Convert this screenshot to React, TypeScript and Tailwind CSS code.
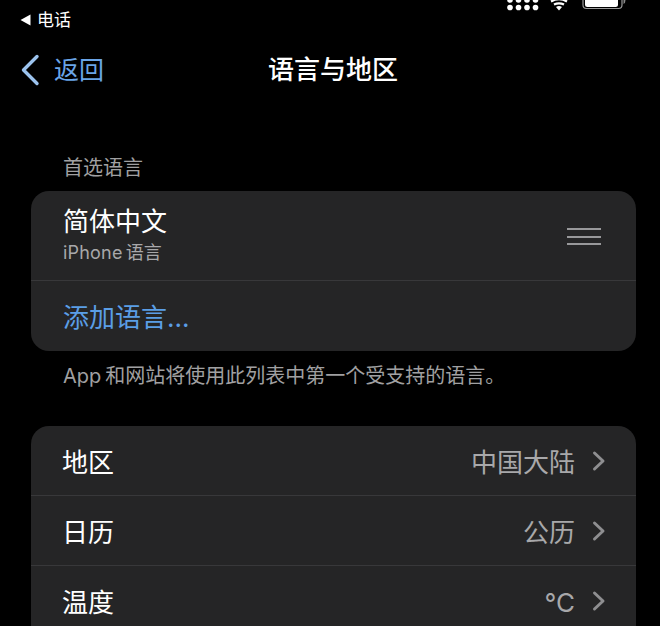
import React from "react"

const font = {
  fontFamily: '"Inter", "Noto Sans CJK SC", sans-serif',
}

const StatusIcons = () => (
  <svg width="124" height="12" viewBox="0 0 124 12" className="block">
    {[0, 8.5, 17, 25.5].map((x) => (
      <g key={x} fill="#fff">
        <circle cx={x + 3} cy={0} r={2.8} />
        <circle cx={x + 3} cy={7.5} r={2.8} />
      </g>
    ))}
    <path d="M44 1.5 Q52 -3 60 1.5" stroke="#fff" strokeWidth="2.2" fill="none" />
    <path d="M47 4.6 Q52 2 57 4.6" stroke="#fff" strokeWidth="2.2" fill="none" />
    <path d="M49 7 Q52 5 55 7 L52 10.5 Z" fill="#fff" />
    <rect x="76" y="-6" width="39" height="14.5" rx="3.5" fill="none" stroke="#9a9a9a" strokeWidth="1.2" />
    <rect x="78" y="-5" width="33" height="12" rx="2.5" fill="#fff" />
    <path d="M116.5 0 L116.5 4 Q118.5 3 118.5 0 Z" fill="#8a8a8a" />
  </svg>
)

const Row = ({ label, value, last }: { label: string; value: string; last?: boolean }) => (
  <div className={`flex h-[70px] items-center pr-[30px] pl-8 ${last ? "" : "border-b border-[#38383a]"}`}>
    <span className="mt-1 ml-[-1px] text-[26px] leading-none text-white">{label}</span>
    <span className="mt-1 ml-auto text-[26px] leading-none text-[#a8a8aa]">{value}</span>
    <svg width="14" height="22" viewBox="0 0 14 22" className="ml-[17px]" fill="none">
      <path d="M2.5 3 L11 11 L2.5 19" stroke="#8e8e90" strokeWidth="3" strokeLinecap="round" strokeLinejoin="round" />
    </svg>
  </div>
)

export default function App() {
  return (
    <div className="h-[626px] w-[660px] overflow-hidden bg-black" style={font}>
      {/* status bar */}
      <div className="flex h-[40px] items-start justify-between pr-[29px] pl-5">
        <div className="mt-[11px] flex items-center gap-[6px] text-white">
          <svg width="11" height="12" viewBox="0 0 11 12">
            <path d="M0.5 6 L10.5 0.5 L10.5 11.5 Z" fill="#fff" />
          </svg>
          <span className="text-[17px] leading-[18px]">电话</span>
        </div>
        <StatusIcons />
      </div>

      {/* nav */}
      <div className="relative flex h-[60px] items-center pl-5">
        <svg width="20" height="32" viewBox="0 0 20 32" fill="none">
          <path d="M17 2.5 L3.5 16 L17 29.5" stroke="#9cc3ee" strokeWidth="3.4" strokeLinecap="round" strokeLinejoin="round" />
        </svg>
        <span className="ml-[14px] text-[25px] leading-none text-[#6aa5e8]">返回</span>
        <span className="absolute right-0 left-[6px] text-center text-[26px] leading-none font-medium text-white">
          语言与地区
        </span>
      </div>

      <p className="mt-[56px] pl-[63px] text-[20px] leading-[24px] text-[#a0a0a2]">首选语言</p>

      <div className="mt-[11px] ml-[31px] w-[605px] rounded-[18px] bg-[#252526]">
        <div className="flex h-[90px] items-center border-b border-[#38383a] pr-[35px] pl-8">
          <div>
            <p className="text-[26px] leading-[30px] text-white">简体中文</p>
            <p className="mt-[5px] flex gap-[3px] text-[18px] leading-[22px] tracking-[0.2px] text-[#a8a8aa]">
              <span>iPhone</span>
              <span>语言</span>
            </p>
          </div>
          <div className="mt-[2px] ml-auto flex w-[34px] flex-col gap-[5.5px]">
            <div className="h-[2px] bg-[#98989a]" />
            <div className="h-[2px] bg-[#98989a]" />
            <div className="h-[2px] bg-[#98989a]" />
          </div>
        </div>
        <div className="flex h-[70px] items-center pl-8">
          <span className="mt-1 text-[26px] leading-none text-[#5b9ee6]">添加语言...</span>
        </div>
      </div>

      <p className="mt-[13px] flex gap-[4px] pl-[63px] text-[20px] leading-[24px] text-[#a0a0a2]">
        <span>App</span>
        <span>和网站将使用此列表中第一个受支持的语言。</span>
      </p>

      <div className="mt-[38px] ml-[31px] w-[605px] rounded-t-[18px] bg-[#252526]">
        <Row label="地区" value="中国大陆" />
        <Row label="日历" value="公历" />
        <Row label="温度" value="°C" last />
      </div>
    </div>
  )
}
